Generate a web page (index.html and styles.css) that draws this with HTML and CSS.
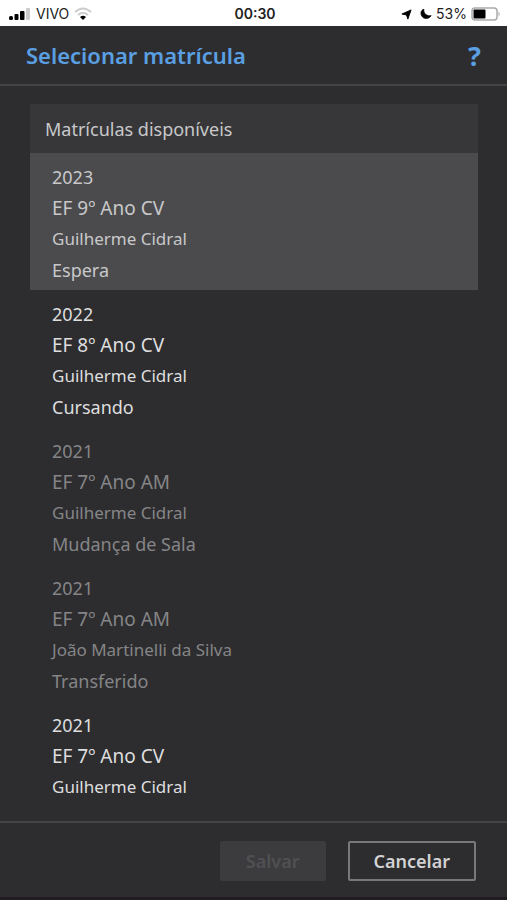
FILE: index.html
```html
<!DOCTYPE html>
<html lang="pt-BR">
<head>
<meta charset="utf-8">
<meta name="viewport" content="width=device-width, initial-scale=1">
<title>Selecionar matrícula</title>
<link rel="stylesheet" href="styles.css">
</head>
<body>
<div class="status">
  <div class="status-side">
    <svg width="22" height="14" viewBox="0 0 22 14" aria-hidden="true">
      <rect x="0" y="9" width="4" height="4" rx="1.500"/><rect x="5.500" y="7" width="4" height="6" rx="1"/><rect x="11" y="4" width="4.500" height="9" rx="1"/><rect x="17" y="1" width="4" height="12" rx="1" fill="#ccc"/>
    </svg>
    <span class="carrier">VIVO</span>
    <svg width="18" height="14" viewBox="0 0 18 14" fill="none" stroke="#ccc" stroke-width="2" aria-hidden="true">
      <path d="M1 5Q9-2 17 5"/><path d="M4 8Q9 3.500 14 8"/><path d="M9 13L6 10Q9 7.500 12 10Z" fill="#000" stroke="none"/>
    </svg>
  </div>
  <time class="clock">00:30</time>
  <div class="status-side status-right">
    <svg width="11" height="11" viewBox="0 0 12 12" aria-hidden="true"><path d="M11 1L7.500 11 6 6.500 1 5.500Z" stroke="#000" stroke-linejoin="round"/></svg>
    <svg class="moon" width="12" height="12" viewBox="-.5 0 14 13" aria-hidden="true"><path d="M4 1C0 2 0 7 2 9.500C5 13 10 12 12.500 8.500C8 9.500 3 6 4 1Z" stroke="#000" stroke-linejoin="round"/></svg>
    <span class="percent">53%</span>
    <svg width="30" height="14" viewBox="0 0 30 14" aria-hidden="true">
      <rect x="1" y="1" width="25" height="12" rx="3" fill="#fff" stroke="#aaa" stroke-width="1.500"/><rect x="2.500" y="2.500" width="12" height="9" rx="1"/><path d="M27.500 4.500Q30 7 27.500 9.500Z" fill="#aaa"/>
    </svg>
  </div>
</div>
<header class="header">
  <h1>Selecionar matrícula</h1>
  <button class="help" type="button" aria-label="Ajuda">?</button>
</header>
<main class="content">
  <h2>Matrículas disponíveis</h2>
  <ul class="list">
    <li><button type="button" class="item selected"><span>2023</span><span class="course">EF 9º Ano CV</span><span class="name">Guilherme Cidral</span><span>Espera</span></button></li>
    <li><button type="button" class="item"><span>2022</span><span class="course">EF 8º Ano CV</span><span class="name">Guilherme Cidral</span><span>Cursando</span></button></li>
    <li><button type="button" class="item" disabled><span>2021</span><span class="course">EF 7º Ano AM</span><span class="name">Guilherme Cidral</span><span>Mudança de Sala</span></button></li>
    <li><button type="button" class="item" disabled><span>2021</span><span class="course">EF 7º Ano AM</span><span class="name">João Martinelli da Silva</span><span>Transferido</span></button></li>
    <li><button type="button" class="item"><span>2021</span><span class="course">EF 7º Ano CV</span><span class="name">Guilherme Cidral</span></button></li>
  </ul>
</main>
<footer class="footer">
  <button type="button" class="action save" disabled>Salvar</button>
  <button type="button" class="action cancel">Cancelar</button>
</footer>
</body>
</html>
```
FILE: styles.css
```css
* { box-sizing: border-box; }
body {
  margin: 0;
  height: 100vh;
  display: flex;
  flex-direction: column;
  background: #2d2d2f;
  color: #dededf;
  font-family: "Noto Sans", "Open Sans", sans-serif;
  font-size: 18px;
}
button { font: inherit; color: inherit; cursor: pointer; }
button:disabled { cursor: default; }
.status {
  flex: none;
  height: 26px;
  padding: 2px 6px 0 9px;
  display: flex;
  align-items: center;
  background: #fff;
  color: #222;
  font: 14px/24px Inter, sans-serif;
}
.status-side { flex: 1; display: flex; align-items: center; gap: 5px; }
.status-right { justify-content: flex-end; gap: 4px; }
.moon { margin-left: 4px; }
.clock { font-weight: 600; }
.header {
  flex: none;
  height: 60px;
  padding: 0 26px;
  display: flex;
  align-items: center;
  justify-content: space-between;
  border-bottom: 2px solid #444446;
  color: #5a9fe2;
}
h1 { margin: 0; font-size: 22px; font-weight: 600; line-height: 32px; }
.help { border: 0; padding: 2px 0 0; background: none; font-size: 27px; font-weight: 700; line-height: 32px; }
.content { flex: 1; min-height: 0; padding: 18px 29px 0 30px; overflow: hidden; }
h2 {
  margin: 0;
  padding: 2px 15px 0;
  background: #373739;
  color: #c8c8ca;
  font-size: 18px;
  font-weight: 400;
  line-height: 47px;
}
.list { margin: 0; padding: 0; list-style: none; }
.item {
  width: 100%;
  display: flex;
  flex-direction: column;
  gap: 1px;
  padding: 9px 22px 5px;
  border: 0;
  background: none;
  text-align: left;
  line-height: 30px;
}
.item.selected { background: #4b4b4d; color: #c8c8ca; }
.item:disabled { color: #858587; }
.course { font-size: 19px; }
.name { font-size: 17px; }
.footer {
  flex: none;
  height: 79px;
  padding: 18px 31px 0;
  display: flex;
  justify-content: flex-end;
  align-items: flex-start;
  gap: 22px;
  border-top: 2px solid #444446;
  border-bottom: 3px solid #211c21;
}
.action { height: 40px; padding: 0 24px; border: 2px solid; border-radius: 2px; font-size: 18px; font-weight: 600; line-height: 32px; }
.save { background: #3c3c3e; border-color: #3c3c3e; color: #505052; }
.cancel { background: none; border-color: #78787a; color: #d2d2d4; }
```
